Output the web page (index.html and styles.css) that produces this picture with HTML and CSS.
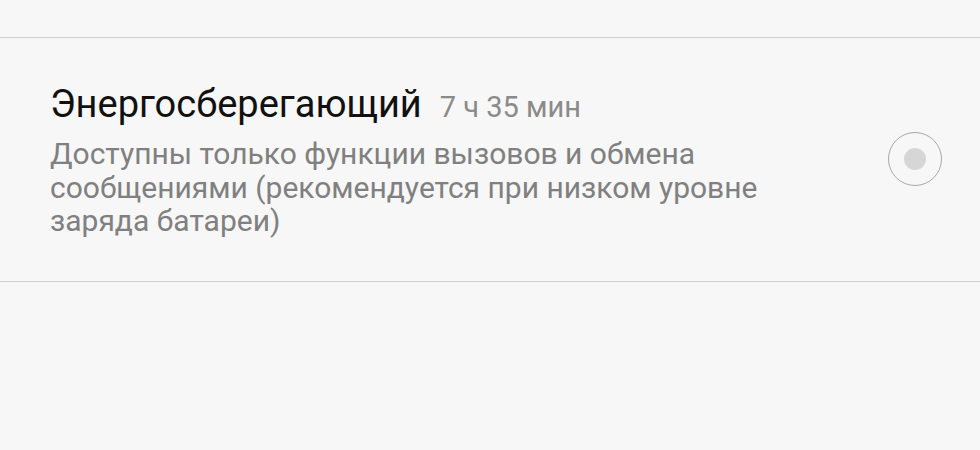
FILE: index.html
```html
<!DOCTYPE html>
<html lang="ru">
<head>
  <meta charset="UTF-8">
  <meta name="viewport" content="width=device-width, initial-scale=1">
  <title>Режим энергосбережения</title>
  <link rel="stylesheet" href="styles.css">
</head>
<body>

  <div class="list">
    <div class="spacer"></div>

    <div class="item">
      <div class="item-text">
        <div class="item-title">
          <span class="title">Энергосберегающий</span>
          <span class="time">7 ч 35 мин</span>
        </div>
        <div class="summary">Доступны только функции вызовов и обмена сообщениями (рекомендуется при низком уровне заряда батареи)</div>
      </div>
      <div class="radio"><span class="dot"></span></div>
    </div>
  </div>

</body>
</html>
```

FILE: styles.css
```css
body {
  background-color: #f7f7f7;
  font-family: Roboto, 'Noto Sans', sans-serif;
  margin: 0;
  padding: 0;
}
.spacer {
  height: 37px;
  border-bottom: 1px solid #cfcfcf;
}
.item {
  display: flex;
  align-items: flex-start;
  justify-content: space-between;
  padding: 44px 38px 43px 50px;
  border-bottom: 1px solid #cfcfcf;
}
.item-text {
  max-width: 800px;
}
.item-title {
  display: flex;
  align-items: baseline;
  gap: 18px;
  margin-bottom: 11px;
}
.title {
  font-size: 38px;
  color: #111;
}
.time {
  font-size: 29px;
  color: #8a8a8a;
}
.summary {
  font-size: 30px;
  line-height: 33.5px;
  color: #808080;
}
.radio {
  width: 52px;
  height: 52px;
  border: 1.5px solid #a8a8a8;
  border-radius: 50%;
  display: flex;
  align-items: center;
  justify-content: center;
  flex-shrink: 0;
  margin-top: 50px;
}
.dot {
  width: 22px;
  height: 22px;
  border-radius: 50%;
  background: #d6d6d6;
}
```
